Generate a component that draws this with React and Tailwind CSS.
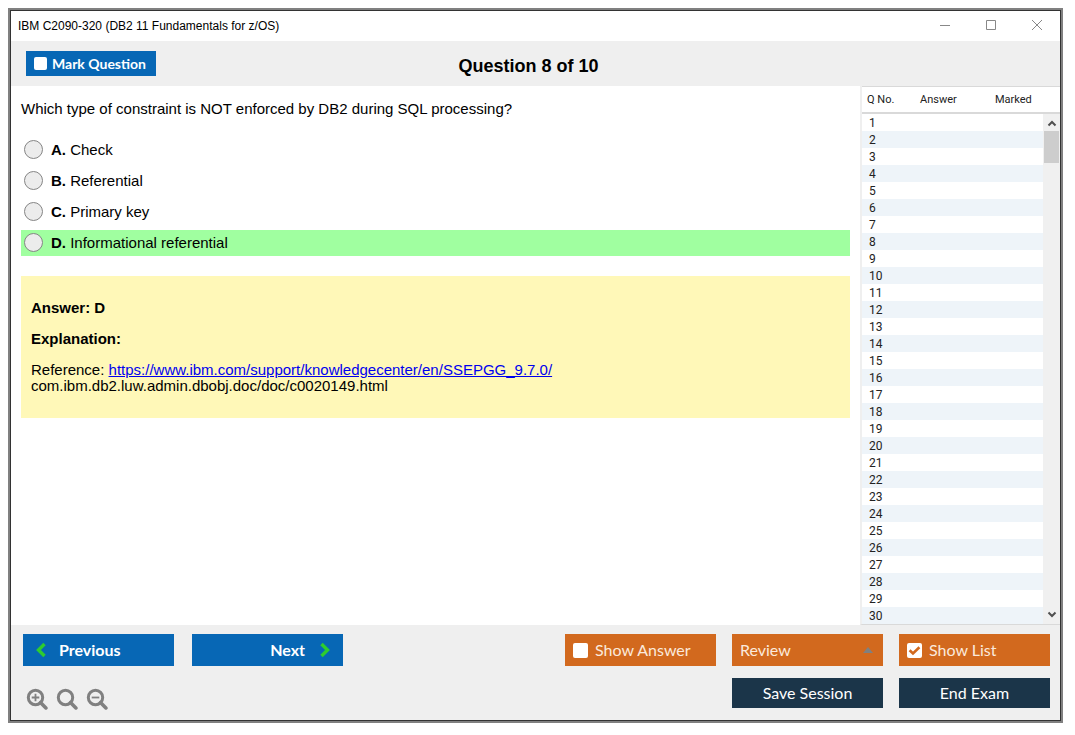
import { useState } from "react";

const OPTIONS = [
  { key: "A", text: "Check" },
  { key: "B", text: "Referential" },
  { key: "C", text: "Primary key" },
  { key: "D", text: "Informational referential", correct: true },
];

const ROWS = Array.from({ length: 30 }, (_, i) => i + 1);

function WindowControls() {
  return (
    <div className="flex items-center text-[#888888]">
      <button type="button" aria-label="Minimize" className="flex w-[46px] justify-center">
        <svg width="12" height="12" viewBox="0 0 12 12" stroke="currentColor" fill="none">
          <path d="M1 5.5h10" />
        </svg>
      </button>
      <button type="button" aria-label="Maximize" className="flex w-[46px] justify-center">
        <svg width="12" height="12" viewBox="0 0 12 12" stroke="currentColor" fill="none">
          <path d="M1.5 .5h9v9h-9z" />
        </svg>
      </button>
      <button type="button" aria-label="Close" className="flex w-[46px] justify-center">
        <svg width="12" height="12" viewBox="0 0 12 12" stroke="currentColor" fill="none">
          <path d="M1 0l10 10M11 0L1 10" />
        </svg>
      </button>
    </div>
  );
}

function CheckBox({ checked, onChange, size }) {
  return (
    <span className="relative flex">
      <input
        type="checkbox"
        checked={checked}
        onChange={(e) => onChange(e.target.checked)}
        className={`${size} appearance-none rounded-[2px] bg-white`}
      />
      {checked && (
        <svg className="pointer-events-none absolute inset-0" width="15" height="15" viewBox="0 0 15 15" fill="none" stroke="#d2691e" strokeWidth="2.6">
          <path d="M2.6 7.2l3.4 3.3 6.4-6.2" />
        </svg>
      )}
    </span>
  );
}

function Magnifier({ label, mark }) {
  return (
    <button type="button" aria-label={label} className="text-[#808080]">
      <svg width="22" height="22" viewBox="0 0 22 22" fill="none" stroke="currentColor">
        <circle cx="9.5" cy="9.5" r="7.2" strokeWidth="3" />
        <path d="M14.5 14.5l5.4 5.4" strokeWidth="3.6" strokeLinecap="round" />
        {mark && <path d={mark} strokeWidth="1.8" />}
      </svg>
    </button>
  );
}

function QuestionList() {
  return (
    <aside className="relative w-[200px] shrink-0 border-b border-l-2 border-b-[#d9d9d9] border-l-[#efefef] bg-white text-xs text-[#222222]">
      <table className="w-full table-fixed border-collapse font-['Roboto',sans-serif]">
        <thead>
          <tr className="h-[26px] border-t border-b-2 border-[#d9d9d9] text-left text-[11px]">
            <th className="w-[49px] pt-[2px] pl-[5px] font-normal">Q No.</th>
            <th className="w-[60px] pt-[2px] pl-[9px] font-normal">Answer</th>
            <th className="pt-[2px] pl-6 font-normal">Marked</th>
          </tr>
        </thead>
        <tbody>
          {ROWS.map((n) => (
            <tr key={n} className="h-[17px] leading-[15px] even:bg-[#eef4f9]">
              <td className="pt-[2px] pl-[7px]">{n}</td>
              <td />
              <td />
            </tr>
          ))}
        </tbody>
      </table>
      <div className="absolute top-7 right-0 bottom-0 flex w-[17px] flex-col items-center justify-between bg-[#f0f0f0] py-1">
        <svg width="10" height="10" viewBox="0 0 10 10" fill="none" stroke="#505050" strokeWidth="2">
          <path d="M1.5 7.5L5 4l3.5 3.5" />
        </svg>
        <div className="absolute top-[17px] right-px h-8 w-[15px] bg-[#cdcdcd]" />
        <svg width="10" height="10" viewBox="0 0 10 10" fill="none" stroke="#505050" strokeWidth="2">
          <path d="M1.5 2.5L5 6l3.5-3.5" />
        </svg>
      </div>
    </aside>
  );
}

export default function App() {
  const [marked, setMarked] = useState(false);
  const [showAnswer, setShowAnswer] = useState(false);
  const [showList, setShowList] = useState(true);

  return (
    <div className="flex min-h-screen bg-white pt-2 pr-3 pb-3 pl-2 font-['Liberation_Sans',Arial,sans-serif] text-black">
      <div className="flex flex-1 border-2 border-[#808080]">
        <div className="flex flex-1 flex-col border border-[#333333]">
          <div className="flex h-[30px] items-center justify-between pl-[7px]">
            <h1 className="text-xs">IBM C2090-320 (DB2 11 Fundamentals for z/OS)</h1>
            <WindowControls />
          </div>

          <header className="grid h-[45px] grid-cols-[1fr_auto_1fr] items-center bg-[#efefef] pr-[29px] pl-[15px]">
            <label className="flex h-[25px] w-[130px] items-center gap-[5px] bg-[#0767b5] pl-2 font-['Lato',sans-serif] text-sm font-bold text-white">
              <CheckBox checked={marked} onChange={setMarked} size="size-[13px]" />
              Mark Question
            </label>
            <h2 className="pt-1 text-lg font-bold">Question 8 of 10</h2>
          </header>

          <div className="flex flex-1">
            <main className="flex-1 px-[10px] pt-[14px] text-[15px] leading-[17px]">
              <p>Which type of constraint is NOT enforced by DB2 during SQL processing?</p>
              <div className="mt-5 flex flex-col gap-[5px]">
                {OPTIONS.map((o) => (
                  <label key={o.key} className={`flex h-[26px] items-center gap-2 pb-px pl-[3px] ${o.correct ? "bg-[#a0ffa0]" : ""}`}>
                    <input type="radio" name="answer" className="size-[19px] appearance-none rounded-full border border-[#858585] bg-[#ececec] checked:border-[6px]" />
                    <span>
                      <b>{o.key}.</b> {o.text}
                    </span>
                  </label>
                ))}
              </div>
              <section className="mt-5 flex flex-col gap-[15px] bg-[#fff8b8] px-[10px] py-6 leading-4">
                <p className="font-bold">Answer: D</p>
                <p className="font-bold">Explanation:</p>
                <p>
                  Reference:{" "}
                  <a href="https://www.ibm.com/support/knowledgecenter/en/SSEPGG_9.7.0/" className="text-[#0000ee] underline">
                    https://www.ibm.com/support/knowledgecenter/en/SSEPGG_9.7.0/
                  </a>
                  <br />
                  com.ibm.db2.luw.admin.dbobj.doc/doc/c0020149.html
                </p>
              </section>
            </main>
            {showList && <QuestionList />}
          </div>

          <footer className="flex h-[95px] justify-between bg-[#efefef] pt-[9px] pr-[10px] pl-3 font-['Lato',sans-serif] text-base text-white">
            <div className="flex flex-col gap-[22px]">
              <div className="flex gap-[18px] font-bold">
                <button type="button" className="flex h-8 w-[151px] items-center gap-3 bg-[#0767b5] pl-3">
                  <svg width="12" height="16" viewBox="0 0 12 16" fill="none" stroke="#2ecc2e" strokeWidth="3.4">
                    <path d="M9.5 2L3.5 8l6 6" />
                  </svg>
                  Previous
                </button>
                <button type="button" className="flex h-8 w-[151px] items-center justify-end gap-[14px] bg-[#0767b5] pr-3">
                  Next
                  <svg width="12" height="16" viewBox="0 0 12 16" fill="none" stroke="#2ecc2e" strokeWidth="3.4">
                    <path d="M2.5 2l6 6-6 6" />
                  </svg>
                </button>
              </div>
              <div className="flex gap-2 pl-[3px]">
                <Magnifier label="Zoom in" mark="M5.7 9.5h7.6M9.5 5.7v7.6" />
                <Magnifier label="Reset zoom" />
                <Magnifier label="Zoom out" mark="M5.7 9.5h7.6" />
              </div>
            </div>

            <div className="flex flex-col gap-3">
              <div className="flex gap-4">
                <label className="flex h-8 w-[151px] items-center gap-[7px] bg-[#d2691e] pl-2 text-[#fbe9dc]">
                  <CheckBox checked={showAnswer} onChange={setShowAnswer} size="size-[15px]" />
                  Show Answer
                </label>
                <div className="relative flex h-8 w-[151px]">
                  <select aria-label="Review" className="w-full appearance-none bg-[#d2691e] pl-2 text-[#fbe9dc]">
                    <option>Review</option>
                  </select>
                  <svg className="pointer-events-none absolute top-[13px] right-[10px]" width="10" height="6" viewBox="0 0 10 6" fill="#808080">
                    <path d="M0 6l5-6 5 6z" />
                  </svg>
                </div>
                <label className="flex h-8 w-[151px] items-center gap-[7px] bg-[#d2691e] pl-2 text-[#fbe9dc]">
                  <CheckBox checked={showList} onChange={setShowList} size="size-[15px]" />
                  Show List
                </label>
              </div>
              <div className="flex justify-end gap-4">
                <button type="button" className="h-[30px] w-[151px] bg-[#1b3549]">Save Session</button>
                <button type="button" className="h-[30px] w-[151px] bg-[#1b3549]">End Exam</button>
              </div>
            </div>
          </footer>
        </div>
      </div>
    </div>
  );
}
